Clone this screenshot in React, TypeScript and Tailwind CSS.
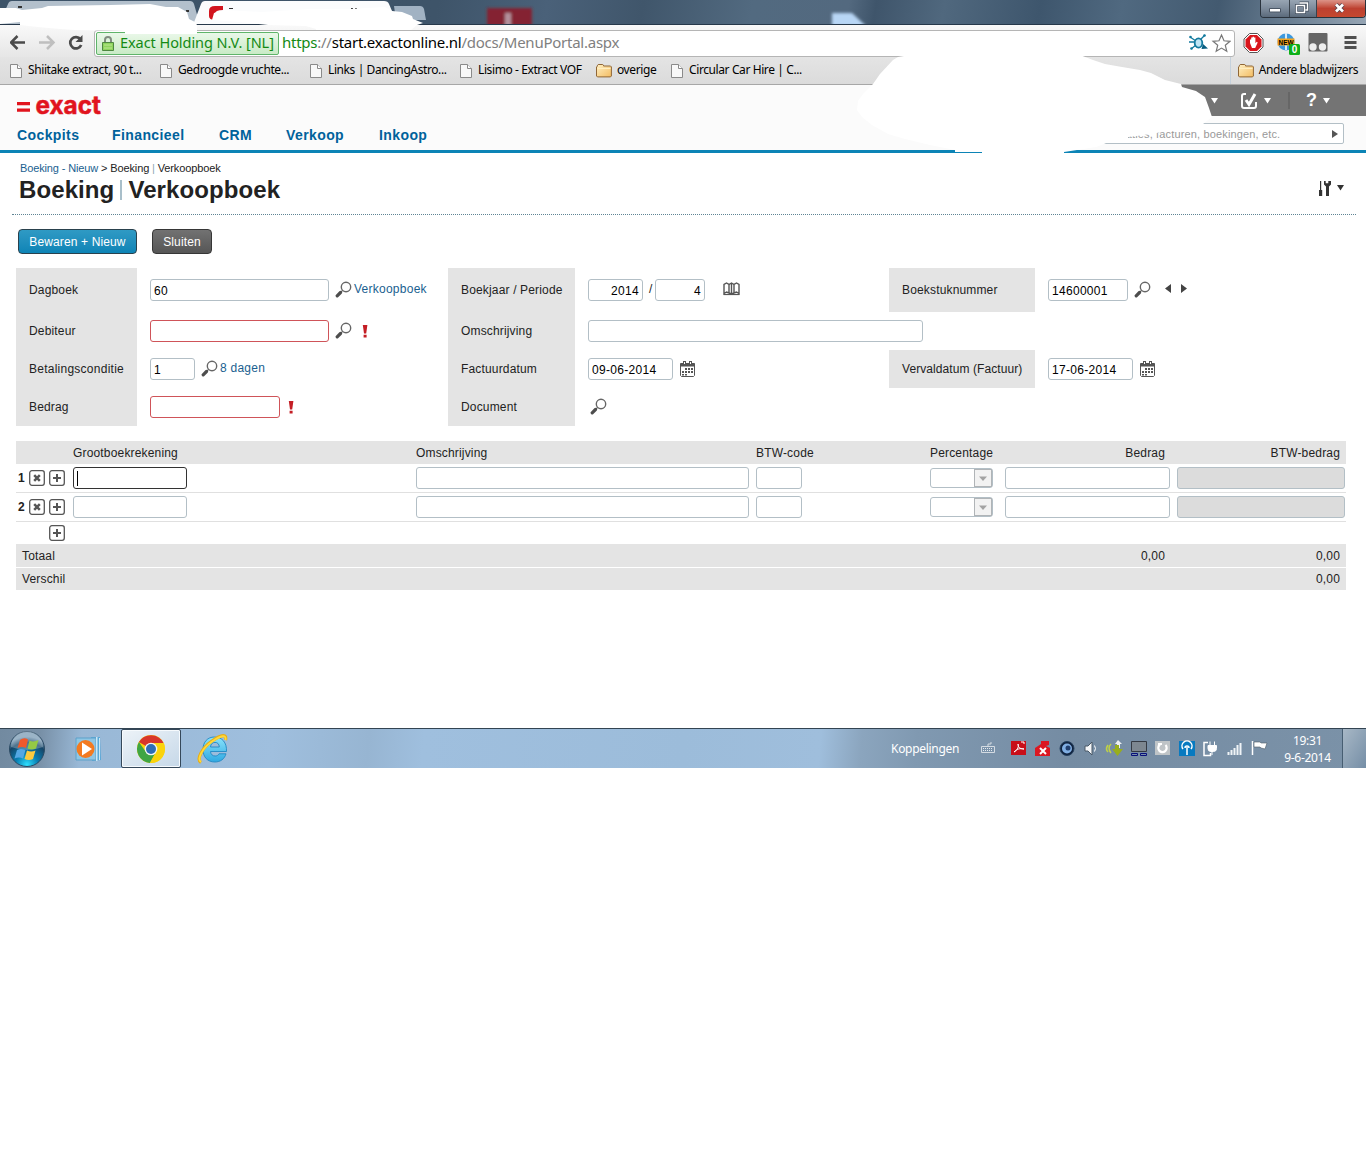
import type { ReactNode } from "react";

const bookmarks = [
  { label: "Shiitake extract, 90 t...", width: "w-[150px]" },
  { label: "Gedroogde vruchte...", width: "w-[150px]" },
  { label: "Links | DancingAstro...", width: "w-[150px]" },
  { label: "Lisimo - Extract VOF", width: "w-[136px]" },
  { label: "overige", width: "w-[75px]", folder: true },
  { label: "Circular Car Hire | C...", width: "w-[150px]" },
];

const menu = [
  { label: "Cockpits", width: "w-[95px]" },
  { label: "Financieel", width: "w-[107px]" },
  { label: "CRM", width: "w-[67px]" },
  { label: "Verkoop", width: "w-[93px]" },
  { label: "Inkoop", width: "w-[80px]" },
];

function PageIcon() {
  return (
    <svg width="12" height="14" viewBox="0 0 12 14" fill="#f8f8f8" stroke="#8a8a8a">
      <path d="M.5.5h7l4 4v9H.5z" />
      <path d="M7.5.5v4h4" fill="#fff" />
    </svg>
  );
}

function FolderIcon() {
  return (
    <svg width="16" height="14" viewBox="0 0 16 14">
      <defs>
        <linearGradient id="folder" x2="1" y2="1">
          <stop stopColor="#fff0c4" />
          <stop offset="1" stopColor="#f3bc62" />
        </linearGradient>
      </defs>
      <path
        d="M.5 12V3l1-1V1.200l.7-.7h4.600l.7.7V2h7l.9.900V12l-.9.900H1.400z"
        fill="url(#folder)"
        stroke="#8f6636"
      />
      <path d="M1.500 4.500h13" stroke="#ffeec0" />
    </svg>
  );
}

function SearchIcon() {
  return (
    <svg className="mb-[2px]" width="17" height="17" viewBox="0 0 17 17" fill="none">
      <circle cx="11" cy="6" r="4.700" stroke="#666" strokeWidth="1.400" />
      <path d="M7.600 9.400 6 11" stroke="#666" strokeWidth="1.200" />
      <path d="M5.500 11.500 2.200 14.800" stroke="#4d4d4d" strokeWidth="3.200" strokeLinecap="round" />
    </svg>
  );
}

function CalendarIcon() {
  return (
    <svg width="16" height="16" viewBox="0 0 16 16" fill="#555">
      <path d="M.5 2.500h14V5H.5z" stroke="#555" />
      <path d="M.5 3v11.500l1 1h12l1-1V3" fill="none" stroke="#555" />
      <rect x="3.500" y=".5" width="2" height="3" fill="#fff" stroke="#555" />
      <rect x="9.500" y=".5" width="2" height="3" fill="#fff" stroke="#555" />
      <path d="M5 7h2v2H5zM8 7h2v2H8zM11 7h2v2h-2zM2 10h2v2H2zM5 10h2v2H5zM8 10h2v2H8zM11 10h2v2h-2zM2 13h2v1.500H2zM5 13h2v1.500H5z" />
    </svg>
  );
}

function BookIcon() {
  return (
    <svg width="17" height="16" viewBox="0 0 17 16" fill="none" stroke="#555">
      <path d="M1 12.500V3.500L3.500 2 6 3.500V12L3.500 11zM16 12.500V3.500L13.500 2 11 3.500V12l2.500-1z" strokeWidth="1.400" />
      <path d="M6 3.500 8.500 2 11 3.500M8.500 2v10.500M6 12l2.500 1 2.500-1" strokeWidth="1.400" />
      <path d="M.5 13.500h16" strokeWidth="1.200" />
    </svg>
  );
}

function Required() {
  return (
    <svg width="6" height="15" viewBox="0 0 6 15" fill="#c41e25">
      <path d="M.8 1h4.600L4.200 9.500H2zM1.600 10.800h3v2.800h-3z" />
    </svg>
  );
}

function RowButton({ kind }: { kind: "remove" | "add" }) {
  return (
    <svg width="16" height="16" viewBox="0 0 16 16" fill="none" stroke="#555">
      <rect x=".7" y=".7" width="14.600" height="14.600" rx="2.200" fill="#fff" strokeWidth="1.300" />
      {kind === "add" ? (
        <path d="M8 4v8M4 8h8" strokeWidth="2" />
      ) : (
        <path d="m5.200 5.200 5.600 5.600m0-5.600-5.600 5.600" strokeWidth="2.500" />
      )}
    </svg>
  );
}

interface FieldProps {
  className?: string;
  border?: string;
  children?: ReactNode;
}

function Field({ className = "", border = "border-[#b3bfc6] bg-white", children }: FieldProps) {
  return (
    <div
      className={`flex h-[22px] shrink-0 items-center rounded-[3px] border px-[3px] pt-[2px] text-[12px] tracking-[0.3px] text-black ${border} ${className}`}
    >
      {children}
    </div>
  );
}

function Label({ children }: { children?: ReactNode }) {
  return (
    <div className={`flex items-center pl-[13px] ${children ? "bg-[#e4e4e4]" : ""}`}>{children}</div>
  );
}

function PercentSelect() {
  return (
    <div className="flex h-5 w-[63px] justify-end rounded-[3px] border border-[#b3bfc6] bg-white">
      <div className="flex w-[18px] items-center justify-center border border-[#b0b4b7] bg-[#f2f2f2]">
        <svg width="8" height="5" viewBox="0 0 8 5" fill="#a3a3a3">
          <path d="M0 .5h8L4 5z" />
        </svg>
      </div>
    </div>
  );
}

function Caret() {
  return (
    <svg width="7" height="6" viewBox="0 0 7 6" fill="currentColor">
      <path d="M0 0h7L3.500 5.500z" />
    </svg>
  );
}

function TitleBar() {
  return (
    <div className="relative h-[25px] overflow-hidden border-b border-[#26384a] bg-[linear-gradient(100deg,#3d5368_0%,#3e5469_32%,#4a6179_40%,#40566b_47%,#526a80_55%,#53697f_62%,#3f556b_64%,#50687e_69%,#3e566d_76%,#506980_82%,#435a70_89%,#6f8396_95%,#96a5b4_100%)]">
      <svg className="absolute left-0 top-0" width="900" height="25" viewBox="0 0 900 25">
        <defs>
          <filter id="soft" x="-30%" y="-30%" width="160%" height="160%">
            <feGaussianBlur stdDeviation="1.500" />
          </filter>
        </defs>
        <path d="M0 24V22L8 4q1-3 4-3H190q3 0 4 3l6 21H0z" fill="#b3c0cc" />
        <path d="M394 6h26q3 0 4 3l2 11H396z" fill="#a1b2c3" />
        <path d="M193 25 201 4q1-3 4-3H384q4 0 5 3l9 21z" fill="#fbfcfd" />
        <path d="M209 11q0-5 6-5h8v4q-8 0-8 4v6q-6 0-6-4z" fill="#d2151e" />
        <path d="M18 6h4v2h-4zM186 10h3v2h-3zM229 8h4v1h-4zM351 8h2v1h-2zM355 8h2v1h-2z" fill="#333" />
        <g filter="url(#soft)">
          <path d="M487 8h45v18h-45z" fill="#842430" />
          <path d="M505 13h6v13h-6z" fill="#b4919c" />
          <path d="M832 13h20l14 13h-34z" fill="#b8d6f5" />
        </g>
      </svg>
      <div className="absolute right-0 top-0 flex h-[18px] w-[106px] overflow-hidden rounded-b-[4px] border border-t-0 border-[#2a333d]">
        <div className="w-[29px] border-r border-[#39424c] bg-linear-to-b from-[#98a5b3] via-[#7d8b9b] via-50% to-[#5b6a7b]">
          <svg width="28" height="17" viewBox="0 0 28 17">
            <path d="M8.500 8.500h11v3.500h-11z" fill="#fff" stroke="#4a5665" />
          </svg>
        </div>
        <div className="w-[27px] border-r border-[#39424c] bg-linear-to-b from-[#98a5b3] via-[#7d8b9b] via-50% to-[#5b6a7b]">
          <svg width="26" height="17" viewBox="0 0 26 17" fill="none">
            <path d="M9.500 3V3h8v7h-2M6.500 5.500h8v7h-8z" stroke="#414d5d" strokeWidth="3" />
            <path d="M9.500 3h8v7h-2M6.500 5.500h8v7h-8z" stroke="#fff" strokeWidth="1.500" />
          </svg>
        </div>
        <div className="grow bg-linear-to-b from-[#dc9388] via-[#bd4030] via-50% to-[#c5482f]">
          <svg width="47" height="17" viewBox="0 0 47 17">
            <path d="m19 4.500 7 7m0-7-7 7" stroke="#59414b" strokeWidth="4.500" />
            <path d="m19 4.500 7 7m0-7-7 7" stroke="#fff" strokeWidth="2.700" />
          </svg>
        </div>
      </div>
    </div>
  );
}

function Toolbar() {
  return (
    <div className="flex h-8 items-center bg-linear-to-b from-[#f9f9f9] to-[#e6e6e6] pl-2.5">
      <svg className="mt-[3px] shrink-0" width="75" height="18" viewBox="0 0 75 18" fill="none" strokeWidth="2.500">
        <path d="M15 8.500H1.500M7.500 2 1 8.500 7.500 15" stroke="#4b4b4b" />
        <path d="M29 8.500h13.500M37 2l6.500 6.500L37 15" stroke="#bfbfbf" />
        <path d="M70.500 5.300a5.700 5.700 0 1 0 .7 5.700" stroke="#4b4b4b" strokeWidth="2.700" />
        <path d="M72.500 1v7h-7z" fill="#4b4b4b" />
      </svg>
      <div className="ml-[9px] mt-1 flex h-[27px] w-[1141px] shrink-0 items-center rounded-[3px] border border-[#b5b5b5] bg-white font-['Noto_Sans','Open_Sans',sans-serif] text-[15px]">
        <div className="ml-[1px] flex h-[23px] w-[183px] shrink-0 items-center whitespace-nowrap rounded-[2px] border border-[#5fb46a] bg-linear-to-b from-[#eaf8e9] to-[#c9eac6] pl-[5px] text-[14.500px] tracking-[-0.060px] text-[#138a14]">
          <svg className="mr-[6px] shrink-0" width="12" height="15" viewBox="0 0 12 15">
            <path d="M3 7V4a3 3 0 0 1 6 0v3" fill="none" stroke="#818d80" strokeWidth="2" />
            <path d="M.5 6.500h11v8H.5z" fill="#8ed45d" stroke="#4e8841" />
            <path d="M2 9h8M2 12h8" stroke="#bde795" />
          </svg>
          Exact Holding N.V. [NL]
        </div>
        <div className="-mt-[2px] ml-[3px] whitespace-nowrap tracking-[-0.250px] text-[#808080]">
          <span className="text-[#138a14]">https</span>://
          <span className="text-black">start.exactonline.nl</span>/docs/MenuPortal.aspx
        </div>
        <svg className="ml-auto mr-[3px] shrink-0" width="42" height="20" viewBox="0 0 42 20" fill="none">
          <path d="M1 4l6 4M0 9h5M2 16l5-4M12 6l4-4" stroke="#137a9e" strokeWidth="1.300" />
          <circle cx="1.500" cy="4" r="1.300" fill="#137a9e" />
          <circle cx="2.500" cy="15.500" r="1.300" fill="#137a9e" />
          <circle cx="15.500" cy="2.500" r="1.300" fill="#137a9e" />
          <ellipse cx="9.500" cy="10" rx="3.800" ry="4.600" stroke="#137a9e" strokeWidth="1.800" fill="#bfe5f5" />
          <path d="M12.500 16 14 11l5 4.500z" fill="#075d81" />
          <path
            d="m32.500 2 2.500 5.800 6 .5-4.700 4 1.500 6-5.300-3.200-5.300 3.200 1.500-6L24 8.300l6-.5z"
            fill="#fff"
            stroke="#777"
            strokeWidth="1.200"
          />
        </svg>
      </div>
      <svg className="ml-[8px] mt-1 shrink-0" width="116" height="24" viewBox="0 0 116 24">
        <path d="M6.500 2.500h8l5.500 5.500v8l-5.500 5.500h-8L1 16V8z" fill="#fff" stroke="#555" />
        <path d="M7 4h7l4.500 4.500v7L14 20H7l-4.500-4.500v-7z" fill="#d9151c" />
        <path d="M7 12V8.500h1.200V12 6.500h1.400V11 5.800H11V11 6.500h1.400v5.800l1.300-1.500 1 .7-2.500 5.500H9z" fill="#fff" />
        <circle cx="43" cy="11" r="8.500" fill="#3d99df" />
        <path d="M42 2h2v17h-2z" fill="#d7eaf7" />
        <path d="M34.500 7.500h17v7h-17z" fill="#f5a51e" />
        <text
          x="35.500"
          y="13.500"
          fontSize="7"
          fontWeight="bold"
          textLength="15"
          lengthAdjust="spacingAndGlyphs"
          fontFamily="Liberation Sans, sans-serif"
        >
          NEW
        </text>
        <rect x="46" y="13" width="11" height="11" rx="1.500" fill="#0daf18" />
        <text x="48.700" y="22" fontSize="10" fontWeight="bold" fill="#fff" fontFamily="Liberation Sans, sans-serif">
          0
        </text>
        <rect x="65.500" y="2" width="19" height="18.500" rx="1" fill="#666" />
        <circle cx="70" cy="16" r="3.700" fill="#eee" />
        <circle cx="79.500" cy="16" r="3.700" fill="#eee" />
        <path d="M101.500 6.500h12M101.500 11.500h12M101.500 16.500h12" stroke="#505050" strokeWidth="3" />
      </svg>
    </div>
  );
}

function BookmarksBar() {
  return (
    <div className="flex h-7 items-center border-b border-[#a7a7a7] bg-linear-to-b from-[#e4e4e4] to-[#dbdbdb] pl-2.5 font-['Noto_Sans','Open_Sans',sans-serif] text-[12px] tracking-[-0.400px] text-black">
      {bookmarks.map((item) => (
        <div key={item.label} className={`flex shrink-0 items-center whitespace-nowrap ${item.width}`}>
          {item.folder ? <FolderIcon /> : <PageIcon />}
          <span className={item.folder ? "-mt-px ml-[5px]" : "-mt-px ml-[6px]"}>{item.label}</span>
        </div>
      ))}
      <div className="ml-auto flex h-full items-center whitespace-nowrap border-l border-[#c5d1dc] pl-[7px] pr-2 tracking-[-0.440px]">
        <FolderIcon />
        <span className="-mt-px ml-[5px]">Andere bladwijzers</span>
      </div>
    </div>
  );
}

function AppHeader() {
  return (
    <div className="flex h-[68px] justify-between border-b-[3px] border-[#0c84b6] bg-[#fbfbfb]">
      <div className="pl-[17px]">
        <svg width="90" height="40" viewBox="0 0 90 40" fill="#e1141e">
          <path d="M0 17h13v3.300H0zM0 23.500h13v3.300H0z" />
          <text
            x="18.500"
            y="28.500"
            fontSize="25"
            fontWeight="bold"
            fontFamily="Inter, Liberation Sans, sans-serif"
            textLength="65.500"
            lengthAdjust="spacingAndGlyphs"
            stroke="#e1141e"
            strokeWidth=".5"
          >
            exact
          </text>
        </svg>
        <nav className="flex text-[14px] font-bold leading-5 tracking-[0.400px] text-[#00629b]">
          {menu.map((item) => (
            <span key={item.label} className={item.width}>
              {item.label}
            </span>
          ))}
        </nav>
      </div>
      <div className="w-[400px]">
        <div className="flex h-[31px] items-center justify-end bg-[#747474] pr-[36px] text-white">
          <Caret />
          <svg className="ml-[22px]" width="18" height="18" viewBox="0 0 18 18" fill="none" stroke="#fff">
            <path d="M6 2H4Q2 2 2 4v10q0 2 2 2h10q2 0 2-2v-4" strokeWidth="2" />
            <path d="m6 8 3 4.500L15 2" strokeWidth="3" />
          </svg>
          <span className="ml-[6px]">
            <Caret />
          </span>
          <span className="ml-[17px] h-[17px] w-[2px] bg-[#666]" />
          <span className="ml-[16px] text-[18px] font-bold">?</span>
          <span className="ml-[6px]">
            <Caret />
          </span>
        </div>
        <div className="ml-auto mr-[22px] mt-[7px] flex h-[21px] w-[270px] items-center justify-between rounded-[2px] border border-[#b3bfc6] bg-white pl-[38px] pr-[5px] text-[11px] tracking-[0.150px] text-[#999]">
          <span className="pt-[2px]">relaties, facturen, boekingen, etc.</span>
          <svg width="6" height="8" viewBox="0 0 6 8" fill="#555">
            <path d="M0 0v8l6-4z" />
          </svg>
        </div>
      </div>
    </div>
  );
}

function PageTitle() {
  return (
    <div className="ml-3 mr-2.5 flex h-[62px] justify-between border-b border-dotted border-[#5f8494] pl-[7px] pt-[9px]">
      <div>
        <div className="whitespace-pre pl-px text-[11px] leading-[13px] tracking-[-0.130px]">
          <span className="text-[#1a5f90]">Boeking - Nieuw</span> &gt; Boeking
          <span className="text-[#8fa7b3]"> | </span>Verkoopboek
        </div>
        <h1 className="mt-[1px] flex items-center text-[24px] font-bold leading-[28px] tracking-[0.100px] text-[#222]">
          Boeking
          <span className="mx-[6px] h-[20px] w-[2px] bg-[#a9bfca]" />
          Verkoopboek
        </h1>
      </div>
      <div className="mr-[12px] mt-[18px] flex gap-[5px] text-[#333]">
        <svg width="14" height="18" viewBox="0 0 14 18" fill="#333">
          <path d="M2 1h1.200v9H2zM1 10h3.200v6H1zM6 1h1.700v2.200h2.600V1H13v3.500l-2 2V16H8V6.500l-2-2z" />
        </svg>
        <span className="pt-[5px]">
          <Caret />
        </span>
      </div>
    </div>
  );
}

function BookingForm() {
  return (
    <div className="ml-4 mt-3.5 grid grid-cols-[121px_311px_127px_314px_146px_1fr] grid-rows-[44px_38px_38px_38px] text-[12px] tracking-[0.160px]">
      <Label>Dagboek</Label>
      <div className="flex items-center pl-[13px]">
        <Field className="w-[179px]">60</Field>
        <span className="ml-[6px]">
          <SearchIcon />
        </span>
        <span className="ml-[2px] pb-[2px] tracking-[0.250px] text-[#1a5f90]">Verkoopboek</span>
      </div>
      <Label>Boekjaar / Periode</Label>
      <div className="flex items-center pl-[13px]">
        <Field className="w-[55px] justify-end">2014</Field>
        <span className="w-[12px] pb-[2px] pl-[6px]">/</span>
        <Field className="w-[50px] justify-end">4</Field>
        <span className="mb-[2px] ml-[18px]">
          <BookIcon />
        </span>
      </div>
      <Label>Boekstuknummer</Label>
      <div className="flex items-center pl-[13px]">
        <Field className="w-[80px]">14600001</Field>
        <span className="ml-[6px]">
          <SearchIcon />
        </span>
        <svg className="mb-[4px] ml-[13px]" width="24" height="9" viewBox="0 0 24 9" fill="#444">
          <path d="M7 0v9L1 4.500zM17 0v9l6-4.500z" />
        </svg>
      </div>

      <Label>Debiteur</Label>
      <div className="flex items-center pl-[13px]">
        <Field className="w-[179px]" border="border-[#cf5459] bg-white" />
        <span className="ml-[6px]">
          <SearchIcon />
        </span>
        <span className="ml-[10px]">
          <Required />
        </span>
      </div>
      <Label>Omschrijving</Label>
      <div className="col-span-3 flex items-center pl-[13px]">
        <Field className="w-[335px]" />
      </div>

      <Label>
        <span className="tracking-[0.250px]">Betalingsconditie</span>
      </Label>
      <div className="flex items-center pl-[13px]">
        <Field className="w-[45px]">1</Field>
        <span className="ml-[6px]">
          <SearchIcon />
        </span>
        <span className="ml-[2px] pb-[2px] tracking-[0.250px] text-[#1a5f90]">8 dagen</span>
      </div>
      <Label>Factuurdatum</Label>
      <div className="flex items-center pl-[13px]">
        <Field className="w-[85px]">09-06-2014</Field>
        <span className="ml-[7px]">
          <CalendarIcon />
        </span>
      </div>
      <Label>
        <span className="tracking-[0.080px]">Vervaldatum (Factuur)</span>
      </Label>
      <div className="flex items-center pl-[13px]">
        <Field className="w-[85px]">17-06-2014</Field>
        <span className="ml-[7px]">
          <CalendarIcon />
        </span>
      </div>

      <Label>Bedrag</Label>
      <div className="flex items-center pl-[13px]">
        <Field className="w-[130px]" border="border-[#cf5459] bg-white" />
        <span className="ml-[8px]">
          <Required />
        </span>
      </div>
      <Label>Document</Label>
      <div className="flex items-center pl-[15px]">
        <SearchIcon />
      </div>
    </div>
  );
}

const lineGrid = "grid grid-cols-[57px_343px_340px_174px_75px_172px_169px] items-center";

function BookingLine({ index, focused }: { index: number; focused?: boolean }) {
  return (
    <div className={`${lineGrid} h-[29px] border-b border-[#e0e0e0]`}>
      <div className="flex items-center pl-[2px]">
        <span className="w-[11px] font-bold">{index}</span>
        <RowButton kind="remove" />
        <span className="ml-1">
          <RowButton kind="add" />
        </span>
      </div>
      <Field className="w-[114px]" border={focused ? "border-[#333] bg-white" : undefined}>
        {focused && <span className="-mt-[2px] h-[15px] w-px bg-black" />}
      </Field>
      <Field className="w-[333px]" />
      <Field className="w-[46px]" />
      <PercentSelect />
      <Field className="w-[165px]" />
      <Field className="w-[168px]" border="border-[#b3bfc6] bg-[#dcdcdc]" />
    </div>
  );
}

function BookingLines() {
  return (
    <div className="ml-4 mt-[15px] w-[1330px] text-[12px] tracking-[0.170px]">
      <div className={`${lineGrid} h-[23px] bg-[#e4e4e4]`}>
        <span />
        <span>Grootboekrekening</span>
        <span>Omschrijving</span>
        <span>BTW-code</span>
        <span>Percentage</span>
        <span className="pr-[12px] text-right">Bedrag</span>
        <span className="pr-[6px] text-right">BTW-bedrag</span>
      </div>
      <BookingLine index={1} focused />
      <BookingLine index={2} />
      <div className="flex h-[22px] items-center pl-[33px]">
        <RowButton kind="add" />
      </div>
      <div className="flex h-[23px] items-center bg-[#e4e4e4] px-[6px]">
        <span>Totaal</span>
        <span className="ml-auto">0,00</span>
        <span className="w-[175px] text-right">0,00</span>
      </div>
      <div className="mt-px flex h-[22px] items-center justify-between bg-[#e4e4e4] px-[6px]">
        <span>Verschil</span>
        <span>0,00</span>
      </div>
    </div>
  );
}

function StartOrb() {
  return (
    <svg width="38" height="38" viewBox="0 0 38 38">
      <defs>
        <radialGradient id="orb" cx=".5" cy=".95" r=".8">
          <stop stopColor="#2fe0ff" />
          <stop offset=".4" stopColor="#087eb2" />
          <stop offset=".8" stopColor="#164567" />
          <stop offset="1" stopColor="#7a9bb5" />
        </radialGradient>
      </defs>
      <circle cx="19" cy="19" r="17.500" fill="url(#orb)" stroke="#2b4a63" />
      <path d="M3 17a16 16 0 0 1 32 0q-16 6-32 0z" fill="#fff" opacity=".25" />
      <path d="M12 10q4-3 8-.500L18 18q-4-2-8.500 0z" fill="#f0592b" />
      <path d="M21.500 10.500q4 2 9-.500L28 18.500q-4 2-8.500 0z" fill="#94c945" />
      <path d="M9 20q4-2 8.500 0L15 28.500q-4-2-8.500 0z" fill="#54a7e3" />
      <path d="M19 20.500q4 2 8.500 0L25 29q-4 2-8.500 0z" fill="#fcca3e" />
    </svg>
  );
}

function MediaPlayerIcon() {
  return (
    <svg width="30" height="28" viewBox="0 0 30 28">
      <path d="M16 2h9l1 23-9 1z" fill="#5aa8d7" />
      <path d="M1 3h20v22H1z" fill="#8fc6e4" stroke="#5da1ca" />
      <path d="M21 2h1.500v24H21zM24 3h1v22h-1z" fill="#c9e8f7" />
      <circle cx="10.500" cy="14" r="9" fill="#f37a20" />
      <path d="m7 7.500 10 6.500-10 6.500z" fill="#fff" />
    </svg>
  );
}

function ChromeIcon() {
  return (
    <svg width="30" height="30" viewBox="0 0 30 30">
      <circle cx="15" cy="15" r="14" fill="#fbd30b" />
      <path d="M15 15 2.900 8A14 14 0 0 1 27.500 9H15z" fill="#d8362b" />
      <path d="M2.900 8a14 14 0 0 0 11 21L20 18l-5-3-5 3z" fill="#3fa544" />
      <path d="M20 18 13.900 29A14 14 0 0 0 27.500 9H15z" fill="#fbd30b" />
      <circle cx="15" cy="15" r="6.300" fill="#f3f5f7" />
      <circle cx="15" cy="15" r="5" fill="#2f6db5" />
    </svg>
  );
}

function ExplorerIcon() {
  return (
    <svg width="32" height="32" viewBox="0 0 32 32" fill="none">
      <defs>
        <linearGradient id="ie" x2="0" y2="1">
          <stop stopColor="#8be4fb" />
          <stop offset="1" stopColor="#2fa9e2" />
        </linearGradient>
      </defs>
      <path
        d="M17.500 4C25 4 30 9.500 29.500 18.500H13.500c.3 3 2 4.500 4.700 4.500 1.800 0 3-.7 3.800-2.200h7C27.500 26 23.500 29 17.800 29 10.500 29 6 24 6 16.500S10.500 4 17.500 4zM13.500 14H22.300c-.2-3-1.700-4.600-4.300-4.600S13.800 11 13.500 14z"
        fill="url(#ie)"
        stroke="#2189c4"
        strokeWidth=".9"
      />
      <path d="M4 29.500C-1 26.500 5 15 15 8S30 1 28.500 7" stroke="#e9ae14" strokeWidth="3.200" />
      <path d="M4 29C-.5 26 5.500 15 15 8.500S29.500 1.500 28.500 7" stroke="#ffd93a" strokeWidth="1.800" />
    </svg>
  );
}

function TrayIcons() {
  return (
    <svg width="290" height="20" viewBox="0 0 290 20" fill="none">
      {/* keyboard */}
      <path d="M1.500 7.500h13v6h-13zM8 7V5h3V3" stroke="#d4dbe2" />
      <path d="M3 9.500h10M3 11.500h10" stroke="#e6ebf0" strokeDasharray="1 1" />
      {/* pdf */}
      <path d="M31 2h15v14H31z" fill="#c80e18" />
      <path d="M34 13c4-2 5-6 4-8 0 4 3 5 6 5-4-1-7 0-10 3M41 3h3v2" stroke="#fff" />
      {/* blocked */}
      <path d="m55 9 6-4V2h8v4l-3 1 4 2v8H55z" fill="#db1721" />
      <path d="m60 9 6 6m0-6-6 6" stroke="#fff" strokeWidth="2" />
      {/* lens */}
      <circle cx="87" cy="9.500" r="7" fill="#10233f" stroke="#26415f" />
      <circle cx="87" cy="9.500" r="5" fill="#80aee2" />
      <circle cx="88" cy="9" r="2.500" fill="#203e6d" />
      {/* volume */}
      <path d="M105 7h3l4-4v13l-4-4h-3z" fill="#f5f7f9" stroke="#4a5967" />
      <path d="M114.500 6.500q2 3 0 6" stroke="#fff" />
      {/* sync */}
      <path d="M131 5q-4 4 0 9M128 6q-3 4 0 7" stroke="#c0d245" strokeWidth="1.500" />
      <path d="m138 1-3 4h2v4h3V5h2z" fill="#eceff1" />
      <path d="M132 10h3V6h4v4h4l-5.500 7z" fill="#98ae1d" />
      {/* display */}
      <path d="M151.500 2.500h15v10h-15z" fill="#7d8790" stroke="#343a43" />
      <path d="M151.500 14.500h6v2h-6zM160.500 14.500h6v2h-6z" stroke="#08107b" />
      {/* update */}
      <path d="M175 2h15v14h-15z" fill="#bfc4c7" />
      <path d="M180 5.500a4.200 4.200 0 1 0 5.500.5M182 5h-4" stroke="#fff" strokeWidth="2.200" />
      {/* wireless */}
      <path d="M199 2h16v15h-16z" fill="#087ac0" />
      <path d="M203 10a5 5 0 1 1 8 0M205 9a2 2 0 1 1 4 0M207 8v8" stroke="#fff" strokeWidth="1.500" />
      {/* power */}
      <path d="M228 3.500h-4v13h6.500V14" stroke="#fff" strokeWidth="1.500" />
      <path d="M228 6.500h8.500v3q0 3-3 3h-2.500q-3 0-3-3zM230 2.500v4M234.500 2.500v4M232 12v4" fill="#fff" stroke="#fff" />
      {/* signal */}
      <path d="M248.500 13v3M251.500 11v5M254.500 9v7M257.500 6v10M260.500 4v12" stroke="#f0f4f7" strokeWidth="2" />
      {/* action center */}
      <path d="M272.500 2v14" stroke="#fff" strokeWidth="1.500" />
      <path d="M274 3h6l1 1h6l-2 6-4-1-1-1h-6z" fill="#fff" stroke="#4d5b67" strokeWidth=".6" />
    </svg>
  );
}

function Taskbar() {
  return (
    <div className="flex h-10 items-center border-t border-[#334452] bg-[linear-gradient(95deg,#728aa0_0%,#7890a7_3%,#99b8d6_6%,#9fbfde_20%,#97b5d2_27%,#9fbfde_31%,#9cbcda_50%,#9fbedc_60%,#8ba5be_63%,#8099b1_67%,#758ca3_78%,#7b92a8_100%)] font-['Noto_Sans','Open_Sans',sans-serif] text-[12px] tracking-[-0.300px] text-white">
      <div className="ml-2 w-[67px]">
        <StartOrb />
      </div>
      <div className="w-[46px]">
        <MediaPlayerIcon />
      </div>
      <div className="flex h-[39px] w-[60px] items-center justify-center rounded-[2px] border border-[#35485a] bg-linear-to-br from-[#edf3f8] to-[#c6d8e8] shadow-[inset_0_0_0_1px_#f6fafd]">
        <ChromeIcon />
      </div>
      <div className="ml-[16px]">
        <ExplorerIcon />
      </div>
      <div className="ml-auto w-[89px]">Koppelingen</div>
      <TrayIcons />
      <div className="w-[72px] pl-[3px] text-center leading-[17px]">
        <div>19:31</div>
        <div>9-6-2014</div>
      </div>
      <div className="h-full w-[24px] border-l border-[#475e72] bg-linear-to-br from-[#a8b8c6] to-[#758ea6]" />
    </div>
  );
}

/* White brush strokes that hide the tab titles and the account details */
function Redactions() {
  return (
    <svg className="absolute left-0 top-0" width="1366" height="160" viewBox="0 0 1366 160" fill="#fff">
      <path d="M0 8H16L22 10 42 8 48 6 110 5 150 4 166 7 178 7 187 12 189 19 195 22 197 25V34H125V31L75 30 60 29 38 27 20 25V22L0 24z" />
      <path d="M212 20 214 13 225 10 262 12 310 9 350 9 385 7 392 11 402 12 412 16 413 19 423 23 417 25 411 30H316V29L306 26 268 25 240 22z" />
      <path d="M910 55 898 57 893 60 880 74 873 84 863 94 858 101 857 110 862 117 872 125 888 134 905 139 930 145 955 150V152H982V154H1064V152L1077 150 1096 147 1104 144 1106 143H1128V137L1137 136 1150 134 1163 132 1175 131 1203 129V124L1212 117 1209 108 1205 97 1196 91 1182 87 1181 84 1165 80 1151 73 1140 70 1122 67 1105 64 1093 60 1080 55z" />
    </svg>
  );
}

export default function App() {
  return (
    <div className="relative h-[1152px] w-[1366px] overflow-hidden bg-white font-['Liberation_Sans',Arial,sans-serif] text-[#222]">
      <div className="h-[728px]">
        <TitleBar />
        <Toolbar />
        <BookmarksBar />
        <AppHeader />
        <PageTitle />
        <div className="ml-[18px] mt-3.5 flex gap-[15px] text-[12px] tracking-[0.130px] text-white">
          <button className="h-[25px] w-[119px] rounded-[4px] border border-[#29414d] bg-linear-to-b from-[#2f9ac4] to-[#0c84b6]">
            Bewaren + Nieuw
          </button>
          <button className="h-[25px] w-[60px] rounded-[4px] border border-[#363636] bg-linear-to-b from-[#727272] to-[#565656]">
            Sluiten
          </button>
        </div>
        <BookingForm />
        <BookingLines />
      </div>
      <Taskbar />
      <Redactions />
    </div>
  );
}
